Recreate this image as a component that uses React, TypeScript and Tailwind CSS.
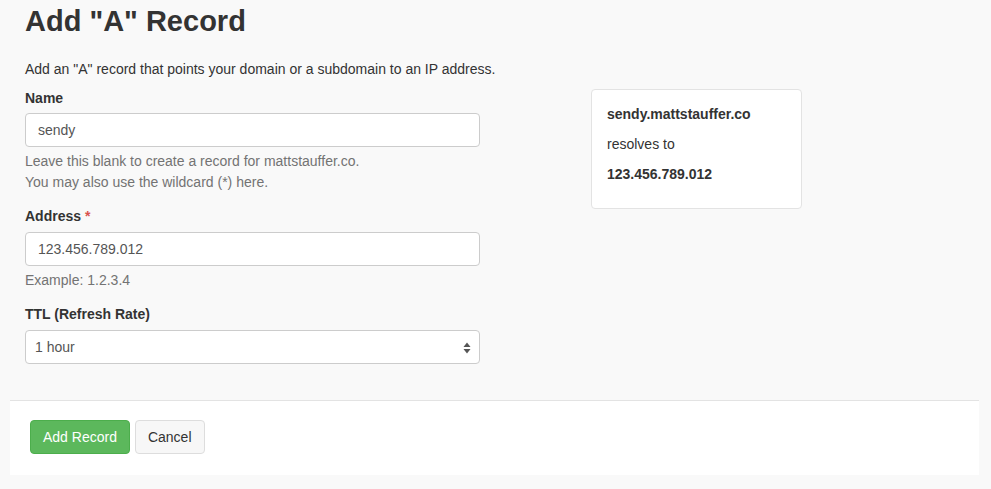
import React from 'react';

const App = () => {
  return (
    <div className="min-h-screen bg-[#f9f9f9] text-[#333] font-['Liberation_Sans',Arial,sans-serif] pt-[3px]">
      <div className="px-[25px]">
        <h1 className="text-[29px] leading-[36px] font-bold">Add "A" Record</h1>

        <p className="mt-[20px] text-[14px] leading-[21px]">
          Add an "A" record that points your domain or a subdomain to an IP address.
        </p>

        <div className="flex">
          <div className="w-[455px]">
            {/* Name */}
            <label className="block mt-[8px] mb-[4px] text-[14px] leading-[21px] font-bold">Name</label>
            <input
              type="text"
              defaultValue="sendy"
              className="block w-full h-[34px] px-[12px] bg-white border border-[#ccc] rounded-[4px] text-[14px] text-[#555] outline-none"
            />
            <p className="mt-[4px] text-[14px] leading-[21px] text-[#737373]">
              Leave this blank to create a record for mattstauffer.co.
              <br />
              You may also use the wildcard (*) here.
            </p>

            {/* Address */}
            <label className="block mt-[13px] mb-[5px] text-[14px] leading-[21px] font-bold">
              Address <span className="text-[#d9534f]">*</span>
            </label>
            <input
              type="text"
              defaultValue="123.456.789.012"
              className="block w-full h-[34px] px-[12px] bg-white border border-[#ccc] rounded-[4px] text-[14px] text-[#555] outline-none"
            />
            <p className="mt-[4px] text-[14px] leading-[21px] text-[#737373]">Example: 1.2.3.4</p>

            {/* TTL */}
            <label className="block mt-[13px] mb-[5px] text-[14px] leading-[21px] font-bold">TTL (Refresh Rate)</label>
            <div className="relative h-[34px] bg-white border border-[#ccc] rounded-[4px]">
              <div className="h-full flex items-center pl-[9px] text-[14px] text-[#555]">1 hour</div>
              <svg className="absolute right-[8px] top-[11px]" width="8" height="12" viewBox="0 0 8 12">
                <path d="M4 0.5 L7.5 5 L0.5 5 Z" fill="#555" />
                <path d="M4 11.5 L7.5 7 L0.5 7 Z" fill="#555" />
              </svg>
            </div>
          </div>

          <div className="ml-[111px] mt-[9px]">
            <div className="w-[211px] h-[120px] bg-white border border-[#e3e3e3] rounded-[4px] px-[15px] pt-[14px] text-[14px] leading-[21px]">
              <p className="font-bold">sendy.mattstauffer.co</p>
              <p className="mt-[9px]">resolves to</p>
              <p className="mt-[9px] font-bold">123.456.789.012</p>
            </div>
          </div>
        </div>
      </div>

      {/* Footer */}
      <div className="mt-[36px] ml-[10px] mr-[12px] bg-white border-t border-[#e3e3e3] px-[20px] pt-[19px] pb-[21px] flex gap-[5px]">
        <button className="h-[34px] px-[12px] bg-[#5cb85c] border border-[#4cae4c] rounded-[4px] text-white text-[14px]">
          Add Record
        </button>
        <button className="h-[34px] px-[12px] bg-[#f7f7f7] border border-[#ddd] rounded-[4px] text-[#333] text-[14px]">
          Cancel
        </button>
      </div>
    </div>
  );
};

export default App;
